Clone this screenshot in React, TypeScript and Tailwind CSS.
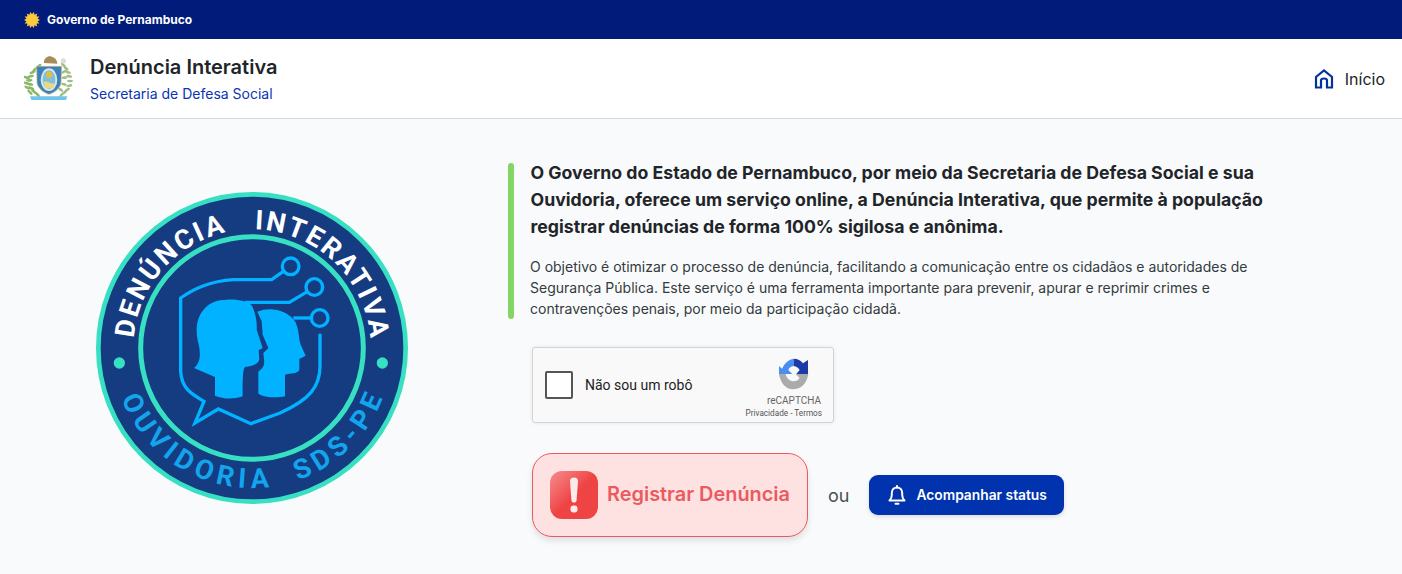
import React from "react";

function Sun() {
  const rays = Array.from({ length: 14 }, (_, i) => {
    const a = (i / 14) * Math.PI * 2;
    const b = a + Math.PI / 11;
    const c = a - Math.PI / 11;
    const p = (r: number, t: number) => `${(8 + r * Math.cos(t)).toFixed(2)},${(8 + r * Math.sin(t)).toFixed(2)}`;
    return `${p(5.4, c)} ${p(8.2, a)} ${p(5.4, b)}`;
  }).join(" ");
  return (
    <svg width="16" height="16" viewBox="0 0 16 16" className="shrink-0">
      <polygon points={rays} fill="#fcc73f" />
      <circle cx="8" cy="8" r="5.6" fill="#fdc93f" />
    </svg>
  );
}

function Emblem() {
  const leftLeaves: [number, number, number][] = [
    [86, 62, 50], [76, 70, 55], [68, 80, 65], [62, 92, 75], [58, 104, 85], [60, 116, 100], [64, 128, 115], [72, 138, 125], [82, 146, 135],
    [50, 96, -70], [48, 112, -80], [52, 126, -60], [60, 140, -45],
  ];
  const rightLeaves: [number, number, number][] = [
    [160, 58, -50], [168, 68, -55], [174, 80, -70], [178, 92, -80], [180, 106, -90], [178, 120, -105], [172, 132, -120], [164, 140, -130], [154, 148, -140],
    [162, 78, 60], [164, 96, 85], [162, 116, 105], [152, 132, 125],
  ];
  return (
    <svg width="50" height="50" viewBox="42 25 150 150" className="shrink-0">
      <g style={{ filter: "blur(0.5px)" }}>
        {leftLeaves.map(([x, y, r], i) => (
          <ellipse key={i} cx={x} cy={y} rx="4" ry="10" fill="#8ab868" transform={`rotate(${r} ${x} ${y})`} />
        ))}
        {rightLeaves.map(([x, y, r], i) => (
          <ellipse key={i} cx={x} cy={y} rx="4" ry="9" fill="#9dbf83" transform={`rotate(${r} ${x} ${y})`} />
        ))}
        <circle cx="160" cy="46" r="8" fill="#d8e0d0" />
        <path d="M60 152 L172 152 L168 163 L64 163Z" fill="#6fc3ee" />
        <path d="M102 52 C100 38 115 28 125 33 C138 36 142 46 142 54 Z" fill="#a98b58" />
        <path d="M80 62 L155 62 L153 112 C150 130 130 142 117 146 C104 142 84 130 81 112 Z" fill="#3a7fc0" stroke="#d5b96a" strokeWidth="2" />
        <ellipse cx="117" cy="102" rx="25" ry="34" fill="#d9e8d8" />
        <ellipse cx="117" cy="102" rx="19" ry="28" fill="#7fc0dc" />
        <circle cx="117" cy="87" r="9" fill="#e8bd3b" />
        <path d="M100 108 C112 104 124 118 134 112 L130 128 L106 128Z" fill="#e8d88a" />
      </g>
    </svg>
  );
}

function Seal() {
  const teal = "#37e0c2";
  const sky = "#00b2ff";
  return (
    <svg width="312" height="312" viewBox="18 22 936 936" className="shrink-0">
      <circle cx="486" cy="490" r="461" fill="#153b80" stroke={teal} strokeWidth="14" />
      <circle cx="486" cy="490" r="334" fill="none" stroke={teal} strokeWidth="15" />
      <circle cx="88" cy="535" r="17" fill={teal} />
      <circle cx="877" cy="535" r="17" fill={teal} />
      <defs>
        <path id="seal-top" d="M 130 490 A 356 356 0 0 1 842 490" />
        <path id="seal-bottom" d="M 66 490 A 420 420 0 0 0 906 490" />
      </defs>
      <text fill="#ffffff" fontFamily="Roboto, sans-serif" fontWeight="700" fontSize="82">
        <textPath href="#seal-top" startOffset="50%" textAnchor="middle" textLength="1060" lengthAdjust="spacing">
          DENÚNCIA{"\u00a0\u00a0\u00a0"}INTERATIVA
        </textPath>
      </text>
      <text fill="#12a5ee" fontFamily="Roboto, sans-serif" fontWeight="700" fontSize="82">
        <textPath href="#seal-bottom" startOffset="50%" textAnchor="middle" textLength="1010" lengthAdjust="spacing">
          OUVIDORIA{"\u00a0\u00a0"}SDS-PE
        </textPath>
      </text>
      <g transform="translate(240 195)">
        <g fill="none" stroke={sky} strokeWidth="10" strokeLinejoin="miter">
          <circle cx="362" cy="50" r="25" />
          <circle cx="433" cy="112" r="25" />
          <circle cx="449" cy="205" r="25" />
          <path d="M340 65 L305 90 L190 90 C120 95 75 115 32 145 L32 365 C35 420 70 435 102 455 L75 520 L145 478 L243 522 L330 490 C420 450 450 410 450 350 L450 252" />
          <path d="M412 126 L358 158 L225 158" />
          <path d="M424 205 L370 205" />
        </g>
        <path fill={sky} d="M72 355 C92 340 92 312 86 284 C65 210 100 150 170 150 C205 148 232 155 246 168 C256 190 262 215 260 240 L278 295 L266 302 L268 330 C262 345 245 350 225 352 C219 362 218 375 218 440 C190 450 160 448 135 438 L135 382 Z" />
        <path fill={sky} d="M262 186 C300 170 350 180 375 215 C388 240 385 265 392 285 L407 318 L388 328 L388 360 C385 372 360 370 345 375 L345 440 C320 445 285 445 265 432 L265 365 C278 358 285 345 282 330 L280 310 L295 295 L278 255 L275 215 Z" />
      </g>
    </svg>
  );
}

function RecaptchaLogo() {
  return (
    <svg width="30" height="32" viewBox="28 18 90 96" className="shrink-0">
      <path d="M28 66 L28 42 L37 50 C45 32 58 22 72 20 L72 42 C64 43 58 47 56 54 L68 66 Z" fill="#4a8ff0" />
      <path d="M72 20 C84 20 94 25 100 34 L115 24 L115 66 L80 66 L90 54 C86 47 80 43 72 42 Z" fill="#1c3aa9" />
      <path d="M28 66 L48 66 C50 78 60 88 72 88 C80 88 86 84 90 78 L78 66 L116 66 C112 94 94 112 70 112 C48 112 32 92 28 66 Z" fill="#ababab" />
    </svg>
  );
}

export default function App() {
  return (
    <div className="h-[574px] overflow-hidden bg-[#f9fafb] font-['Inter',sans-serif] text-[#212529]">
      <div className="flex h-[39px] items-center gap-[7px] bg-[#001b7a] pl-[24px]">
        <Sun />
        <span className="text-[12px] font-bold text-white">Governo de Pernambuco</span>
      </div>

      <header className="flex h-[80px] items-center justify-between border-b border-[#d5d7db] bg-white pl-[24px] pr-[17px]">
        <div className="flex items-center gap-[16px]">
          <Emblem />
          <div className="flex flex-col">
            <span className="text-[20px] font-semibold leading-[28px] text-[#212529]">Denúncia Interativa</span>
            <span className="mt-[2px] text-[14px] leading-[21px] text-[#0a35b5]">Secretaria de Defesa Social</span>
          </div>
        </div>
        <div className="flex items-center gap-[11px]">
          <svg width="20" height="20" viewBox="0 0 20 20" fill="none" stroke="#0033a0" strokeWidth="2.2" strokeLinejoin="miter">
            <path d="M2 18.5 L2 8 L10 1.5 L18 8 L18 18.5 L13 18.5 L13 11.5 C13 10 12 9.5 10 9.5 C8 9.5 7 10 7 11.5 L7 18.5 Z" />
          </svg>
          <span className="text-[16px] text-[#212529]">Início</span>
        </div>
      </header>

      <main className="flex">
        <div className="w-[508px] pl-[96px] pt-[73px]">
          <Seal />
        </div>
        <div className="flex flex-col pt-[40px]">
          <div className="flex w-[770px] gap-[16px]">
            <div className="mt-[4px] h-[156px] w-[6px] shrink-0 rounded-full bg-[#83d566]" />
            <div className="flex flex-col">
              <p className="ml-[0.5px] text-[17.7px] font-bold leading-[27px] text-[#212529]">
                O Governo do Estado de Pernambuco, por meio da Secretaria de Defesa Social e sua
                <br />
                Ouvidoria, oferece um serviço online, a Denúncia Interativa, que permite à população
                <br />
                registrar denúncias de forma 100% sigilosa e anônima.
              </p>
              <p className="mt-[16px] text-[14px] leading-[21px] text-[#343a40]">
                O objetivo é otimizar o processo de denúncia, facilitando a comunicação entre os cidadãos e autoridades de
                <br />
                Segurança Pública. Este serviço é uma ferramenta importante para prevenir, apurar e reprimir crimes e
                <br />
                contravenções penais, por meio da participação cidadã.
              </p>
            </div>
          </div>

          <div className="ml-[24px] mt-[28px] flex h-[76px] w-[302px] items-center rounded-[3px] border border-[#d3d3d3] bg-[#f9f9f9] pl-[12px] pr-[11px] font-['Roboto',sans-serif] shadow-[0_0_4px_rgba(0,0,0,0.08)]">
            <div className="h-[28px] w-[28px] rounded-[2px] border-2 border-[#555555] bg-white" />
            <span className="ml-[12px] text-[14px] text-[#222222]">Não sou um robô</span>
            <div className="ml-auto flex flex-col items-end">
              <div className="mr-[13px] mt-[6px]">
                <RecaptchaLogo />
              </div>
              <span className="mr-[1px] mt-[4px] text-[10px] leading-[14px] text-[#666666]">reCAPTCHA</span>
              <span className="text-[8.2px] leading-[10px] text-[#555555]">Privacidade - Termos</span>
            </div>
          </div>

          <div className="ml-[24px] mt-[30px] flex items-center">
            <button className="flex h-[84px] w-[276px] items-center gap-[9px] rounded-[20px] border border-[#ea5a5f] bg-[#fee2e2] pl-[17px] shadow-[0_4px_6px_rgba(0,0,0,0.1)]">
              <span className="flex h-[48px] w-[48px] items-center justify-center rounded-[12px] bg-gradient-to-br from-[#f58a90] via-[#ef4444] to-[#ef4444]">
                <svg width="10" height="36" viewBox="0 0 10 36" fill="#fdeaea">
                  <path d="M1 4 C1 1.5 3 0.5 5 0.5 C7 0.5 9 1.5 9 4 L7.6 23 C7.4 25 6.4 25.5 5 25.5 C3.6 25.5 2.6 25 2.4 23 Z" />
                  <rect x="1.5" y="28.5" width="7" height="7" rx="3" />
                </svg>
              </span>
              <span className="text-[19.9px] font-semibold text-[#ea5a60]">Registrar Denúncia</span>
            </button>
            <span className="ml-[20px] text-[18px] text-[#495057]">ou</span>
            <button className="ml-[20px] flex h-[40px] w-[195px] items-center gap-[10px] rounded-[9px] bg-[#0033ad] pl-[19px] shadow-[0_2px_4px_rgba(0,0,0,0.12)]">
              <svg width="18" height="20" viewBox="0 0 18 20" fill="none" stroke="#ffffff" strokeWidth="2" strokeLinecap="round" strokeLinejoin="round">
                <path d="M1.5 15.5 C3 14 3.8 12.5 3.8 10 L3.8 8 C3.8 4.8 6 2.5 9 2.5 C12 2.5 14.2 4.8 14.2 8 L14.2 10 C14.2 12.5 15 14 16.5 15.5 Z" />
                <path d="M9 1 L9 2.5" />
                <path d="M7.5 18.8 L10.5 18.8" />
              </svg>
              <span className="pt-[1px] text-[13.8px] font-semibold text-white">Acompanhar status</span>
            </button>
          </div>
        </div>
      </main>
    </div>
  );
}
